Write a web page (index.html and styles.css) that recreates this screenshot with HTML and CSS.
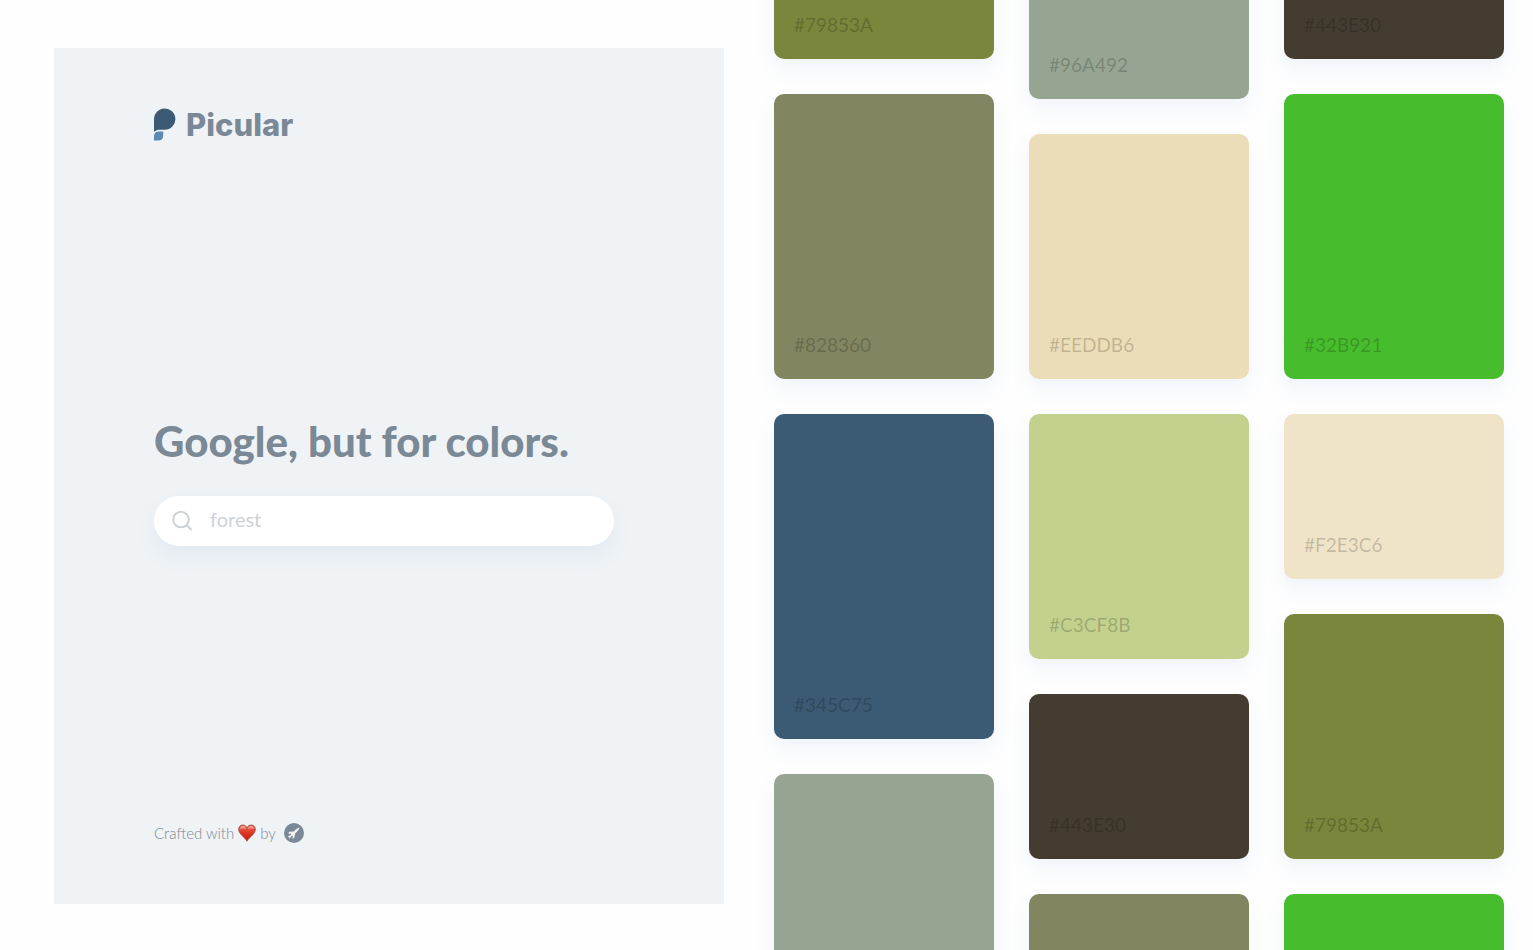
FILE: index.html
```html
<!DOCTYPE html>
<html lang="en">
<head>
<meta charset="utf-8">
<title>Picular</title>
<link rel="stylesheet" href="styles.css">
</head>
<body>
<div class="page">
  <main class="panel">
    <a class="brand" href="#">
      <svg class="brand-mark" viewBox="0 0 22 33" aria-hidden="true">
        <path fill="#3c5a73" d="M0 22V11.500A10.700 10.700 0 1 1 10.800 21.800H7C3.500 21.800 1.500 22.300 0 24Z"/>
        <path fill="#5a8ab4" d="M0 32.500V28.500Q0 23.500 5 23.500H9.200V27.500Q9.200 32.500 4.200 32.500Z"/>
      </svg>
      <span>Picular</span>
    </a>
    <form class="search">
      <h1 class="title"><label for="query">Google, but for colors.</label></h1>
      <div class="search-box">
        <svg class="search-icon" viewBox="0 0 22 22" aria-hidden="true">
          <circle cx="10" cy="9.500" r="7.800"/>
          <path d="M15.500 15L20.500 20"/>
        </svg>
        <input class="search-input" id="query" type="text" placeholder="forest">
      </div>
    </form>
    <footer class="credits">
      <span>Crafted with</span>
      <svg class="heart" viewBox="0 0 18 18" role="img" aria-label="love">
        <defs>
          <linearGradient id="heart-fill" x1="0" y1="0" x2="0" y2="1">
            <stop offset="0" stop-color="#e8705f"/>
            <stop offset=".45" stop-color="#e03a28"/>
            <stop offset="1" stop-color="#c3150c"/>
          </linearGradient>
        </defs>
        <path fill="url(#heart-fill)" stroke="#a03a30" stroke-width=".8" d="M9 17.200C7.500 13.600.7 10.400.7 5.300C.7 2.700 2.500 1 4.800 1C6.800 1 8.300 2.100 9 4C9.700 2.100 11.200 1 13.200 1C15.500 1 17.300 2.700 17.300 5.300C17.300 10.400 10.500 13.600 9 17.200Z"/>
        <path fill="#fff" opacity=".4" d="M2 5C2.200 2.900 3.500 2 5 2C6.600 2 7.700 3.300 8 5C6 4 4 4 2 5ZM10 5C10.300 3.300 11.400 2 13 2C14.500 2 15.800 2.900 16 5C14 4 12 4 10 5Z"/>
      </svg>
      <span>by</span>
      <a class="maker" href="#" aria-label="Maker's site">
        <svg viewBox="0 0 20 20" aria-hidden="true">
          <circle cx="10" cy="10" r="10" fill="#7b8996"/>
          <path fill="#eff3f6" d="M15.600 4.500C13.500 4.900 11.500 6.500 9.900 8.400L5.300 8.800L4.200 10.800L7.200 10.700L6.600 12.200L3.600 13.400L5 14.200L5.500 15.800L7.200 13.200L8.800 12.600L8.400 15.800L10.200 14.900L11.300 10.300C13.300 8.600 15.100 6.700 15.600 4.500Z"/>
        </svg>
      </a>
    </footer>
  </main>
  <section class="wall" aria-label="Colors">
    <div class="column">
      <div class="tile h245 olive">#79853A</div>
      <div class="tile h285 moss">#828360</div>
      <div class="tile h325 blue">#345C75</div>
      <div class="tile h285 sage"></div>
    </div>
    <div class="column">
      <div class="tile h285 sage">#96A492</div>
      <div class="tile h245 sand">#EEDDB6</div>
      <div class="tile h245 lime">#C3CF8B</div>
      <div class="tile h165 bark">#443E30</div>
      <div class="tile h285 moss"></div>
    </div>
    <div class="column short">
      <div class="tile h165 bark">#443E30</div>
      <div class="tile h285 green">#32B921</div>
      <div class="tile h165 cream">#F2E3C6</div>
      <div class="tile h245 olive">#79853A</div>
      <div class="tile h285 green"></div>
    </div>
  </section>
</div>
</body>
</html>
```
FILE: styles.css
```css
* {
  box-sizing: border-box;
}

body {
  margin: 0;
  background: #fefefe;
  font-family: Lato, "Open Sans", sans-serif;
  color: #7b8996;
}

.page {
  display: grid;
  grid-template-columns: 67fr 73fr;
  gap: 50px;
  height: 100vh;
  padding: 0 29px 0 54px;
  overflow: hidden;
}

.panel {
  display: flex;
  flex-direction: column;
  justify-content: space-between;
  margin: 48px 0 46px;
  padding: 60px 110px 60px 100px;
  background: #eff3f6;
}

.brand {
  display: flex;
  align-items: center;
  gap: 10px;
  color: #7b8996;
  font-family: Inter, sans-serif;
  font-size: 31px;
  font-weight: 800;
  line-height: 32px;
  text-decoration: none;
}

.brand-mark {
  width: 22px;
  height: 33px;
}

.search {
  margin-bottom: 2px;
}

.title {
  margin: 0 0 30px;
  font-size: 42px;
  font-weight: 900;
  line-height: 50px;
  white-space: nowrap;
}

.search-box {
  display: flex;
  align-items: center;
  gap: 17px;
  height: 50px;
  padding: 0 17px;
  border-radius: 25px;
  background: #fff;
  box-shadow: 0 10px 20px rgba(90, 130, 180, 0.08);
}

.search-icon {
  flex: none;
  width: 22px;
  height: 22px;
  fill: none;
  stroke: #cdd2d6;
  stroke-width: 2;
}

.search-input {
  flex: 1;
  min-width: 0;
  padding: 0 0 4px;
  border: 0;
  outline: 0;
  background: none;
  color: #7b8996;
  font: 20px/30px Lato, sans-serif;
}

.search-input::placeholder {
  color: #cdd2d6;
  opacity: 1;
}

.credits {
  display: flex;
  align-items: center;
  gap: 4px;
  font-size: 15px;
  font-weight: 300;
  line-height: 22px;
}

.heart {
  width: 18px;
  height: 18px;
}

.maker {
  width: 20px;
  height: 20px;
  margin-left: 4px;
}

.maker svg {
  display: block;
}

.wall {
  display: grid;
  grid-template-columns: repeat(3, 1fr);
  gap: 35px;
  min-height: 0;
}

.column {
  display: flex;
  flex-direction: column;
  gap: 35px;
  margin-top: -186px;
}

.column.short {
  margin-top: -106px;
}

.tile {
  display: flex;
  flex: none;
  align-items: flex-end;
  padding: 20px;
  border-radius: 10px;
  box-shadow: 0 10px 20px rgba(60, 130, 200, 0.08);
  color: rgba(0, 0, 0, 0.2);
  font-size: 19px;
  line-height: 28px;
}

.h165 { height: 165px; }
.h245 { height: 245px; }
.h285 { height: 285px; }
.h325 { height: 325px; }

.olive { background: #79863b; }
.moss { background: #818560; }
.blue { background: #3b5a73; }
.sage { background: #96a592; }
.sand { background: #ebddb8; }
.lime { background: #c2d18d; }
.bark { background: #443c30; }
.green { background: #47bc2c; }
.cream { background: #efe4c8; }
```
